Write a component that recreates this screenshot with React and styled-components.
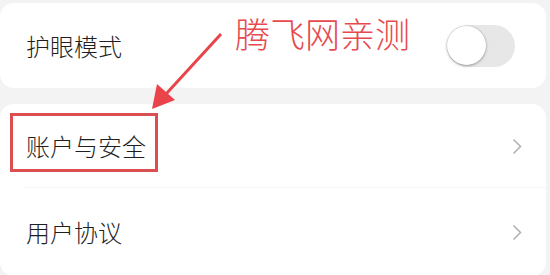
import React from "react";
import styled, { createGlobalStyle } from "styled-components";

const Global = createGlobalStyle`
  html, body { margin: 0; padding: 0; background: #f3f3f4; }
  body { font-family: "Noto Sans CJK SC", "Noto Sans", sans-serif; }
`;

const Page = styled.div`
  position: relative;
  width: 550px;
  height: 275px;
  overflow: hidden;
  box-sizing: border-box;
  padding: 3px 4px 0 0;
  display: flex;
  flex-direction: column;
  gap: 16px;
`;

const Card = styled.div`
  background: #ffffff;
  border-radius: 14px;
  display: flex;
  flex-direction: column;
`;

const Row = styled.div`
  height: ${(p) => p.$h || 84}px;
  display: flex;
  align-items: center;
  justify-content: space-between;
  padding: 0 ${(p) => p.$pr || 24}px 0 26px;
  box-sizing: border-box;
  position: relative;
  ${(p) =>
    p.$divider &&
    `&::after{content:"";position:absolute;left:24px;right:0;bottom:0;height:1px;background:#f4f4f4;}`}
`;

const Label = styled.span`
  font-size: 24px;
  font-weight: 300;
  color: #1f1f1f;
  line-height: 1;
  margin-top: ${(p) => p.$mt || 0}px;
`;

const Track = styled.div`
  width: 68px;
  height: 42px;
  border-radius: 21px;
  background: #e7e7e7;
  position: relative;
`;

const Knob = styled.div`
  position: absolute;
  left: 0;
  top: 1px;
  width: 39px;
  height: 39px;
  border-radius: 50%;
  background: #fff;
  box-shadow: 0 1px 3px rgba(0, 0, 0, 0.3), 0 0 0 0.5px rgba(0, 0, 0, 0.12);
`;

const Chevron = () => (
  <svg width="10" height="17" viewBox="0 0 10 17">
    <path d="M1.5 1.5 L8.5 8.5 L1.5 15.5" fill="none" stroke="#b3b3b3" strokeWidth="1.6" />
  </svg>
);

const Note = styled.div`
  position: absolute;
  left: 235px;
  top: 14px;
  font-size: 35px;
  font-weight: 300;
  line-height: 1.1;
  color: #e64a4e;
  white-space: nowrap;
`;

const Frame = styled.div`
  position: absolute;
  left: 10px;
  top: 113px;
  width: 142px;
  height: 53px;
  border: 3px solid #dc4f50;
`;

const ArrowSvg = styled.svg`
  position: absolute;
  left: 140px;
  top: 20px;
`;

export default function App() {
  return (
    <>
      <Global />
      <Page>
        <Card>
          <Row $h={85} $pr={31}>
            <Label>护眼模式</Label>
            <Track>
              <Knob />
            </Track>
          </Row>
        </Card>
        <Card>
          <Row $divider>
            <Label $mt={-1}>账户与安全</Label>
            <Chevron />
          </Row>
          <Row $h={88}>
            <Label>用户协议</Label>
            <Chevron />
          </Row>
        </Card>
        <Note>腾飞网亲测</Note>
        <ArrowSvg width="100" height="100" viewBox="0 0 100 100">
          <line x1="81" y1="14" x2="26" y2="74" stroke="#e8444a" strokeWidth="3" />
          <polygon points="12,89 35,80 17,64" fill="#e8444a" />
        </ArrowSvg>
        <Frame />
      </Page>
    </>
  );
}
